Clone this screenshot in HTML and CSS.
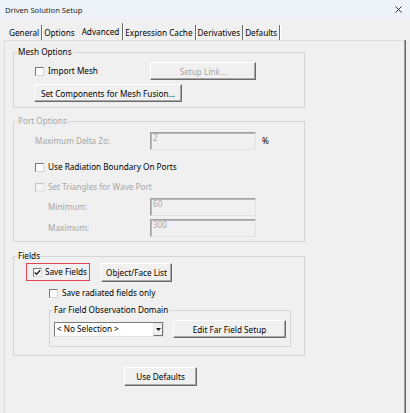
FILE: index.html
```html
<!DOCTYPE html>
<html>
<head>
<meta charset="utf-8">
<title>Driven Solution Setup</title>
<link rel="stylesheet" href="styles.css">
</head>
<body>
<div class="titlebar">
  <span class="title">Driven Solution Setup</span>
  <svg class="close" width="7" height="7" viewBox="0 0 7 7"><path d="M0.5 0.5L6.5 6.5M6.5 0.5L0.5 6.5" stroke="#2b2b2b" stroke-width="1"/></svg>
</div>
<div class="tabs">
  <span class="tab">General</span>
  <span class="tab tab-before-active">Options</span>
  <span class="tab tab-active">Advanced</span>
  <span class="tab">Expression Cache</span>
  <span class="tab">Derivatives</span>
  <span class="tab">Defaults</span>
</div>
<div class="panel">
  <fieldset class="group g-mesh">
    <legend>Mesh Options</legend>
    <div class="row row-import">
      <label class="check check-import"><span class="box"></span><span>Import Mesh</span></label>
      <button class="btn btn-setup" disabled>Setup Link...</button>
    </div>
    <div class="row row-components">
      <button class="btn btn-components">Set Components for Mesh Fusion...</button>
    </div>
  </fieldset>

  <fieldset class="group g-port">
    <legend class="legend-off">Port Options</legend>
    <div class="row row-delta">
      <span class="lbl lbl-delta">Maximum Delta Zo:</span>
      <span class="field">2</span>
      <span class="unit">%</span>
    </div>
    <div class="row row-radiation">
      <label class="check"><span class="box"></span><span>Use Radiation Boundary On Ports</span></label>
    </div>
    <div class="row row-tri">
      <label class="check check-off"><span class="box box-off"></span><span>Set Triangles for Wave Port</span></label>
    </div>
    <div class="row row-min">
      <span class="lbl lbl-sub">Minimum:</span>
      <span class="field">60</span>
    </div>
    <div class="row row-max">
      <span class="lbl lbl-sub">Maximum:</span>
      <span class="field">300</span>
    </div>
  </fieldset>

  <fieldset class="group g-fields">
    <legend>Fields</legend>
    <div class="row row-save">
      <div class="highlight">
        <label class="check"><span class="box"><svg class="tick" width="7" height="7" viewBox="0 0 7 7"><polyline points="0.8,3.4 2.6,5.3 6.2,1.2" fill="none" stroke="#1a1a1a" stroke-width="1.3"/></svg></span><span>Save Fields</span></label>
      </div>
      <button class="btn btn-object">Object/Face List</button>
    </div>
    <div class="row row-radiated">
      <label class="check"><span class="box"></span><span>Save radiated fields only</span></label>
    </div>
    <fieldset class="group g-far">
      <legend>Far Field Observation Domain</legend>
      <div class="row row-far">
        <div class="select">
          <span class="sel-text">&lt; No Selection &gt;</span>
          <span class="sel-arrow"><svg width="5" height="3" viewBox="0 0 5 3"><polygon points="0,0 5,0 2.5,3" fill="#111"/></svg></span>
        </div>
        <button class="btn btn-edit">Edit Far Field Setup</button>
      </div>
    </fieldset>
  </fieldset>

  <div class="row row-defaults">
    <button class="btn btn-defaults">Use Defaults</button>
  </div>
</div>
</body>
</html>
```

FILE: styles.css
```css
* { box-sizing: border-box; }
html, body { margin: 0; padding: 0; }
body {
  width: 410px;
  height: 413px;
  overflow: hidden;
  background: #f0f0f0;
  font-family: "Noto Sans", "Open Sans", sans-serif;
  font-size: 8.2px;
  color: #000;
}

/* title bar */
.titlebar {
  height: 19px;
  background: #eef3f9;
  display: flex;
  align-items: center;
  justify-content: space-between;
  padding: 0 8px 0 5px;
}
.title { font-size: 7.6px; line-height: 10px; color: #1b1b1b; }
.close { display: block; }

/* tabs */
.tabs {
  display: flex;
  align-items: flex-end;
  height: 21px;
  padding-left: 7px;
}
.tab {
  height: 15px;
  line-height: 14px;
  padding: 1px 2px 0 2px;
  border-right: 1px solid #6e6e6e;
  box-shadow: 1px 0 0 #ffffff;
  white-space: nowrap;
}
.tab-before-active { border-right: none; box-shadow: none; padding-right: 3px; }
.tab-active { height: 17px; padding: 2px 3px 0 4px; }

/* panel */
.panel {
  margin-left: 4px;
  width: 401px;
  height: 380px;
  border-top: 1px solid #dcdcdc;
  border-left: 1px solid #dcdcdc;
  border-right: 1px solid #9d9d9d;
  box-shadow: 1px 0 0 #6a6a6a;
  padding: 0 0 0 8px;
}

/* group boxes */
.group {
  border: 1px solid #d5d5d5;
  margin: 0;
  padding: 0;
  min-width: 0;
  width: 292px;
}
legend {
  margin-left: 3px;
  padding: 0 1px;
  line-height: 12px;
  font-size: 8.2px;
}
.legend-off { color: #a6a6a6; }

.g-mesh { margin-top: 5px; padding-bottom: 5px; }
.g-port { margin-top: 7px; padding-bottom: 4px; }
.g-fields { margin-top: 8px; padding-bottom: 8px; }
.g-far { margin-top: 4px; margin-left: 35px; width: 242px; padding-bottom: 8px; }

/* rows */
.row { display: flex; align-items: center; }
.row-import { margin-top: 4px; height: 18px; padding-left: 21px; }
.row-components { margin-top: 4px; height: 18px; padding-left: 20px; }
.row-delta { margin-top: 5px; height: 18px; padding-left: 21px; }
.row-radiation { margin-top: 8px; height: 18px; padding-left: 21px; }
.row-tri { margin-top: 2px; height: 18px; padding-left: 21px; }
.row-min { margin-top: 2px; height: 18px; padding-left: 34px; }
.row-max { margin-top: 3px; height: 18px; padding-left: 34px; }
.row-save { height: 20px; padding-left: 12px; }
.row-radiated { margin-top: 4px; height: 14px; padding-left: 35px; }
.row-far { margin-top: 4px; height: 18px; padding-left: 4px; }
.row-defaults { margin-top: 11px; padding-left: 111px; }

/* labels */
.lbl { color: #a6a6a6; line-height: 12px; }
.lbl-delta { width: 115px; }
.lbl-sub { width: 102px; }
.unit { margin-left: 6px; line-height: 12px; }

/* checkboxes */
.check { display: flex; align-items: center; line-height: 12px; white-space: nowrap; }
.check-import { width: 115px; }
.check-off { color: #a6a6a6; }
.box {
  flex: none;
  width: 9px;
  height: 9px;
  margin-right: 4px;
  background: #ffffff;
  border: 1px solid;
  border-color: #777777 #d4d4d4 #d4d4d4 #777777;
  display: flex;
  align-items: center;
  justify-content: center;
}
.box-off { background: #f4f4f4; border-color: #c4c4c4 #e2e2e2 #e2e2e2 #c4c4c4; }
.tick { display: block; }

/* highlight */
.highlight {
  width: 64px;
  height: 18px;
  border: 1px solid #e3454e;
  padding-left: 6px;
  display: flex;
  align-items: center;
}
.highlight .box { margin-right: 3px; }

/* buttons */
.btn {
  font: inherit;
  color: #000;
  background: #f0f0f0;
  height: 18px;
  padding: 0;
  margin: 0;
  border: 1px solid;
  border-color: #ffffff #6b6b6b #6b6b6b #ffffff;
  box-shadow: inset -1px -1px 0 #a8a8a8;
  display: flex;
  align-items: center;
  justify-content: center;
  white-space: nowrap;
}
.btn:disabled { color: #a6a6a6; }
.btn-setup { width: 106px; }
.btn-components { width: 148px; }
.btn-object { width: 71px; height: 19px; margin-left: 11px; }
.btn-edit { width: 113px; margin-left: 9px; }
.btn-defaults { width: 73px; height: 19px; }

/* text fields */
.field {
  width: 106px;
  height: 18px;
  background: #f0f0f0;
  border: 1px solid;
  border-color: #a0a0a0 #e3e3e3 #e3e3e3 #a0a0a0;
  box-shadow: inset 1px 1px 0 #b8b8b8;
  color: #a6a6a6;
  line-height: 10px;
  padding: 0 2px;
}

/* select */
.select {
  width: 110px;
  height: 15px;
  background: #ffffff;
  border: 1px solid;
  border-color: #7a7a7a #e0e0e0 #e0e0e0 #7a7a7a;
  display: flex;
  align-items: center;
  justify-content: space-between;
}
.sel-text { padding-left: 2px; line-height: 12px; white-space: nowrap; }
.sel-arrow {
  width: 10px;
  height: 13px;
  background: #f0f0f0;
  border: 1px solid;
  border-color: #e8e8e8 #6e6e6e #6e6e6e #e8e8e8;
  display: flex;
  align-items: center;
  justify-content: center;
}
.sel-arrow svg { display: block; }
```
